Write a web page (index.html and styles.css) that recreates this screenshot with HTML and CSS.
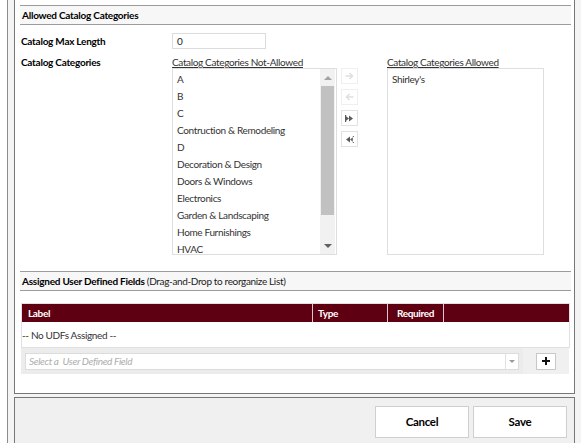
FILE: index.html
```html
<!DOCTYPE html>
<html>
<head>
<meta charset="utf-8">
<link rel="stylesheet" href="styles.css">
</head>
<body>
<div class="shell">
  <div class="panel">
    <div class="sec-head"><b>Allowed Catalog Categories</b></div>

    <div class="row row-max">
      <div class="lbl">Catalog Max Length</div>
      <div class="input">0</div>
    </div>

    <div class="row row-cats">
      <div class="lbl">Catalog Categories</div>
      <div class="picker">
        <div class="col">
          <div class="col-title">Catalog Categories Not-Allowed</div>
          <div class="listbox">
            <ul class="items">
              <li>A</li>
              <li>B</li>
              <li>C</li>
              <li>Contruction &amp; Remodeling</li>
              <li>D</li>
              <li>Decoration &amp; Design</li>
              <li>Doors &amp; Windows</li>
              <li>Electronics</li>
              <li>Garden &amp; Landscaping</li>
              <li>Home Furnishings</li>
              <li>HVAC</li>
            </ul>
            <div class="scrollbar">
              <div class="sb-btn"><span class="tri-up"></span></div>
              <div class="sb-thumb"></div>
              <div class="sb-track"></div>
              <div class="sb-btn"><span class="tri-down"></span></div>
            </div>
          </div>
        </div>

        <div class="movers">
          <div class="mv disabled">
            <svg width="9" height="8" viewBox="0 0 9 8"><path d="M0.5 4H7.5M4.5 1L7.5 4L4.5 7" fill="none" stroke="currentColor" stroke-width="1.6"/></svg>
          </div>
          <div class="mv disabled">
            <svg width="9" height="8" viewBox="0 0 9 8"><path d="M8.5 4H1.5M4.5 1L1.5 4L4.5 7" fill="none" stroke="currentColor" stroke-width="1.6"/></svg>
          </div>
          <div class="mv">
            <svg width="9" height="7" viewBox="0 0 9 7"><path d="M0 0.5L4 3.5L0 6.5Z M4 0.5L8 3.5L4 6.5Z M0 0H1.2V7H0Z" fill="currentColor"/></svg>
          </div>
          <div class="mv">
            <svg width="9" height="7" viewBox="0 0 9 7"><path d="M9 0.5L5 3.5L9 6.5Z M5 0.5L1 3.5L5 6.5Z M7.8 0H9V7H7.8Z" fill="currentColor"/></svg>
          </div>
        </div>

        <div class="col col-allowed">
          <div class="col-title">Catalog Categories Allowed</div>
          <div class="listbox">
            <ul class="items">
              <li>Shirley's</li>
            </ul>
          </div>
        </div>
      </div>
    </div>

    <div class="sec-head sec-udf"><b>Assigned User Defined Fields</b>&nbsp;<span>(Drag-and-Drop to reorganize List)</span></div>

    <div class="udf-table">
      <div class="th-row">
        <div class="th th-label">Label</div>
        <div class="th th-type">Type</div>
        <div class="th th-req">Required</div>
        <div class="th th-rest"></div>
      </div>
      <div class="td-row">-- No UDFs Assigned --</div>
    </div>

    <div class="udf-add">
      <div class="add-cell">
        <div class="select">
          <span class="placeholder">Select a &nbsp;User Defined Field</span>
          <span class="sel-arrow"><span class="tri-down"></span></span>
        </div>
      </div>
      <div class="plus-cell">
        <div class="plus">
          <svg width="8" height="8" viewBox="0 0 8 8"><path d="M3 0H5V3H8V5H5V8H3V5H0V3H3Z" fill="#111"/></svg>
        </div>
      </div>
    </div>
  </div>

  <div class="footer">
    <div class="btn">Cancel</div>
    <div class="btn">Save</div>
  </div>
</div>
</body>
</html>
```
FILE: styles.css
```css
html, body {
  margin: 0;
  padding: 0;
  height: 100%;
  overflow: hidden;
  background: #ffffff;
}

body {
  font-family: "Lato", "Open Sans", sans-serif;
  font-size: 10px;
  letter-spacing: -0.35px;
  line-height: 12px;
  color: #222;
}

b { font-weight: 700; letter-spacing: -0.25px; }

.shell {
  margin-left: 7px;
  border-left: 1px solid #8c8c8c;
  padding-left: 6px;
  background: #f4f4f4;
  height: 100%;
}

.panel {
  width: 561px;
  box-sizing: border-box;
  background: #fff;
  border: 1px solid #777;
  border-top: none;
  padding: 5px 3px 19px 5px;
}

.sec-head {
  height: 20px;
  box-sizing: border-box;
  border-top: 1px solid #9c9c9c;
  border-bottom: 1px solid #9c9c9c;
  background: #f7f7f7;
  padding-left: 2px;
  display: flex;
  align-items: center;
  color: #000;
}

.sec-udf { margin-top: 16px; }
.sec-udf span { color: #222; }

.row { display: flex; }

.lbl {
  width: 151px;
  padding-left: 1px;
  font-weight: 700;
  letter-spacing: -0.25px;
  color: #000;
}

.row-max {
  margin-top: 8px;
  align-items: center;
}

.input {
  width: 94px;
  height: 16px;
  box-sizing: border-box;
  border: 1px solid #dcdcdc;
  padding-left: 4px;
  line-height: 14px;
  color: #222;
}

.row-cats { margin-top: 7px; }

.picker {
  display: flex;
  align-items: flex-start;
}

.col-title {
  height: 12px;
  text-decoration: underline;
  color: #333;
}

.listbox {
  width: 165px;
  height: 187px;
  box-sizing: border-box;
  border: 1px solid #dedede;
  display: flex;
  overflow: hidden;
  background: #fff;
}

.items {
  list-style: none;
  margin: 0;
  padding: 2px 0 0 4px;
  flex: 1;
  overflow: hidden;
}

.items li {
  height: 17px;
  line-height: 17px;
  white-space: nowrap;
  color: #333;
}

.scrollbar {
  width: 15px;
  margin-right: 1px;
  display: flex;
  flex-direction: column;
  background: #f1f1f1;
}

.sb-btn {
  height: 17px;
  display: flex;
  align-items: center;
  justify-content: center;
}

.sb-thumb {
  height: 129px;
  background: #c1c1c1;
  margin: 0 1px;
}

.sb-track { flex: 1; }

.tri-up {
  width: 0; height: 0;
  border-left: 4px solid transparent;
  border-right: 4px solid transparent;
  border-bottom: 4px solid #a3a3a3;
}

.tri-down {
  width: 0; height: 0;
  border-left: 4px solid transparent;
  border-right: 4px solid transparent;
  border-top: 4px solid #606060;
}

.movers {
  margin: 12px 0 0 4px;
  display: flex;
  flex-direction: column;
  gap: 5px;
}

.mv {
  width: 17px;
  height: 16px;
  box-sizing: border-box;
  border: 1px solid #e2e2e2;
  background: #fff;
  display: flex;
  align-items: center;
  justify-content: center;
  color: #5a5a5a;
}

.mv.disabled {
  border-color: #efefef;
  color: #e0e0e0;
}

.col-allowed { margin-left: 29px; }
.col-allowed .listbox { width: 157px; }

.udf-table {
  margin: 12px 0 0 1px;
  width: 549px;
  box-sizing: border-box;
  border: 1px solid #e0e0e0;
}

.th-row {
  display: flex;
  height: 18px;
  background: #5f0012;
  color: #fff;
}

.th {
  display: flex;
  align-items: center;
  font-weight: 700;
  letter-spacing: -0.35px;
  border-right: 1px solid #d8c8cc;
  box-sizing: border-box;
}

.th-label { width: 291px; padding-left: 6px; }
.th-type { width: 75px; padding-left: 5px; }
.th-req { width: 56px; justify-content: center; }
.th-rest { flex: 1; border-right: none; }

.td-row {
  height: 25px;
  display: flex;
  align-items: center;
  color: #333;
}

.udf-add {
  margin-left: 1px;
  width: 548px;
  height: 26px;
  display: flex;
}

.add-cell {
  width: 502px;
  background: #ececec;
  display: flex;
  align-items: center;
  padding-left: 4px;
  box-sizing: border-box;
}

.select {
  width: 494px;
  height: 17px;
  box-sizing: border-box;
  border: 1px solid #dcdcdc;
  background: #fff;
  display: flex;
  align-items: center;
}

.placeholder {
  flex: 1;
  padding-left: 3px;
  font-style: italic;
  color: #adadad;
}

.sel-arrow {
  width: 12px;
  height: 15px;
  border-left: 1px solid #e2e2e2;
  display: flex;
  align-items: center;
  justify-content: center;
}

.sel-arrow .tri-down {
  border-left-width: 3px;
  border-right-width: 3px;
  border-top: 3px solid #9a9a9a;
}

.plus-cell {
  flex: 1;
  background: #f0f0f0;
  display: flex;
  align-items: center;
  justify-content: center;
}

.plus {
  width: 20px;
  height: 17px;
  box-sizing: border-box;
  border: 1px solid #c8c8c8;
  background: #fff;
  display: flex;
  align-items: center;
  justify-content: center;
}

.footer {
  margin-top: 3px;
  width: 561px;
  height: 60px;
  box-sizing: border-box;
  border: 1px solid #777;
  background: #f0f0f0;
  padding: 8px 7px 0 0;
  display: flex;
  justify-content: flex-end;
  align-items: flex-start;
  gap: 4px;
}

.btn {
  width: 94px;
  height: 32px;
  box-sizing: border-box;
  border: 1px solid #cfcfcf;
  background: #fff;
  display: flex;
  align-items: center;
  justify-content: center;
  font-weight: 700;
  font-size: 11.5px;
  letter-spacing: -0.3px;
  color: #000;
}
```
